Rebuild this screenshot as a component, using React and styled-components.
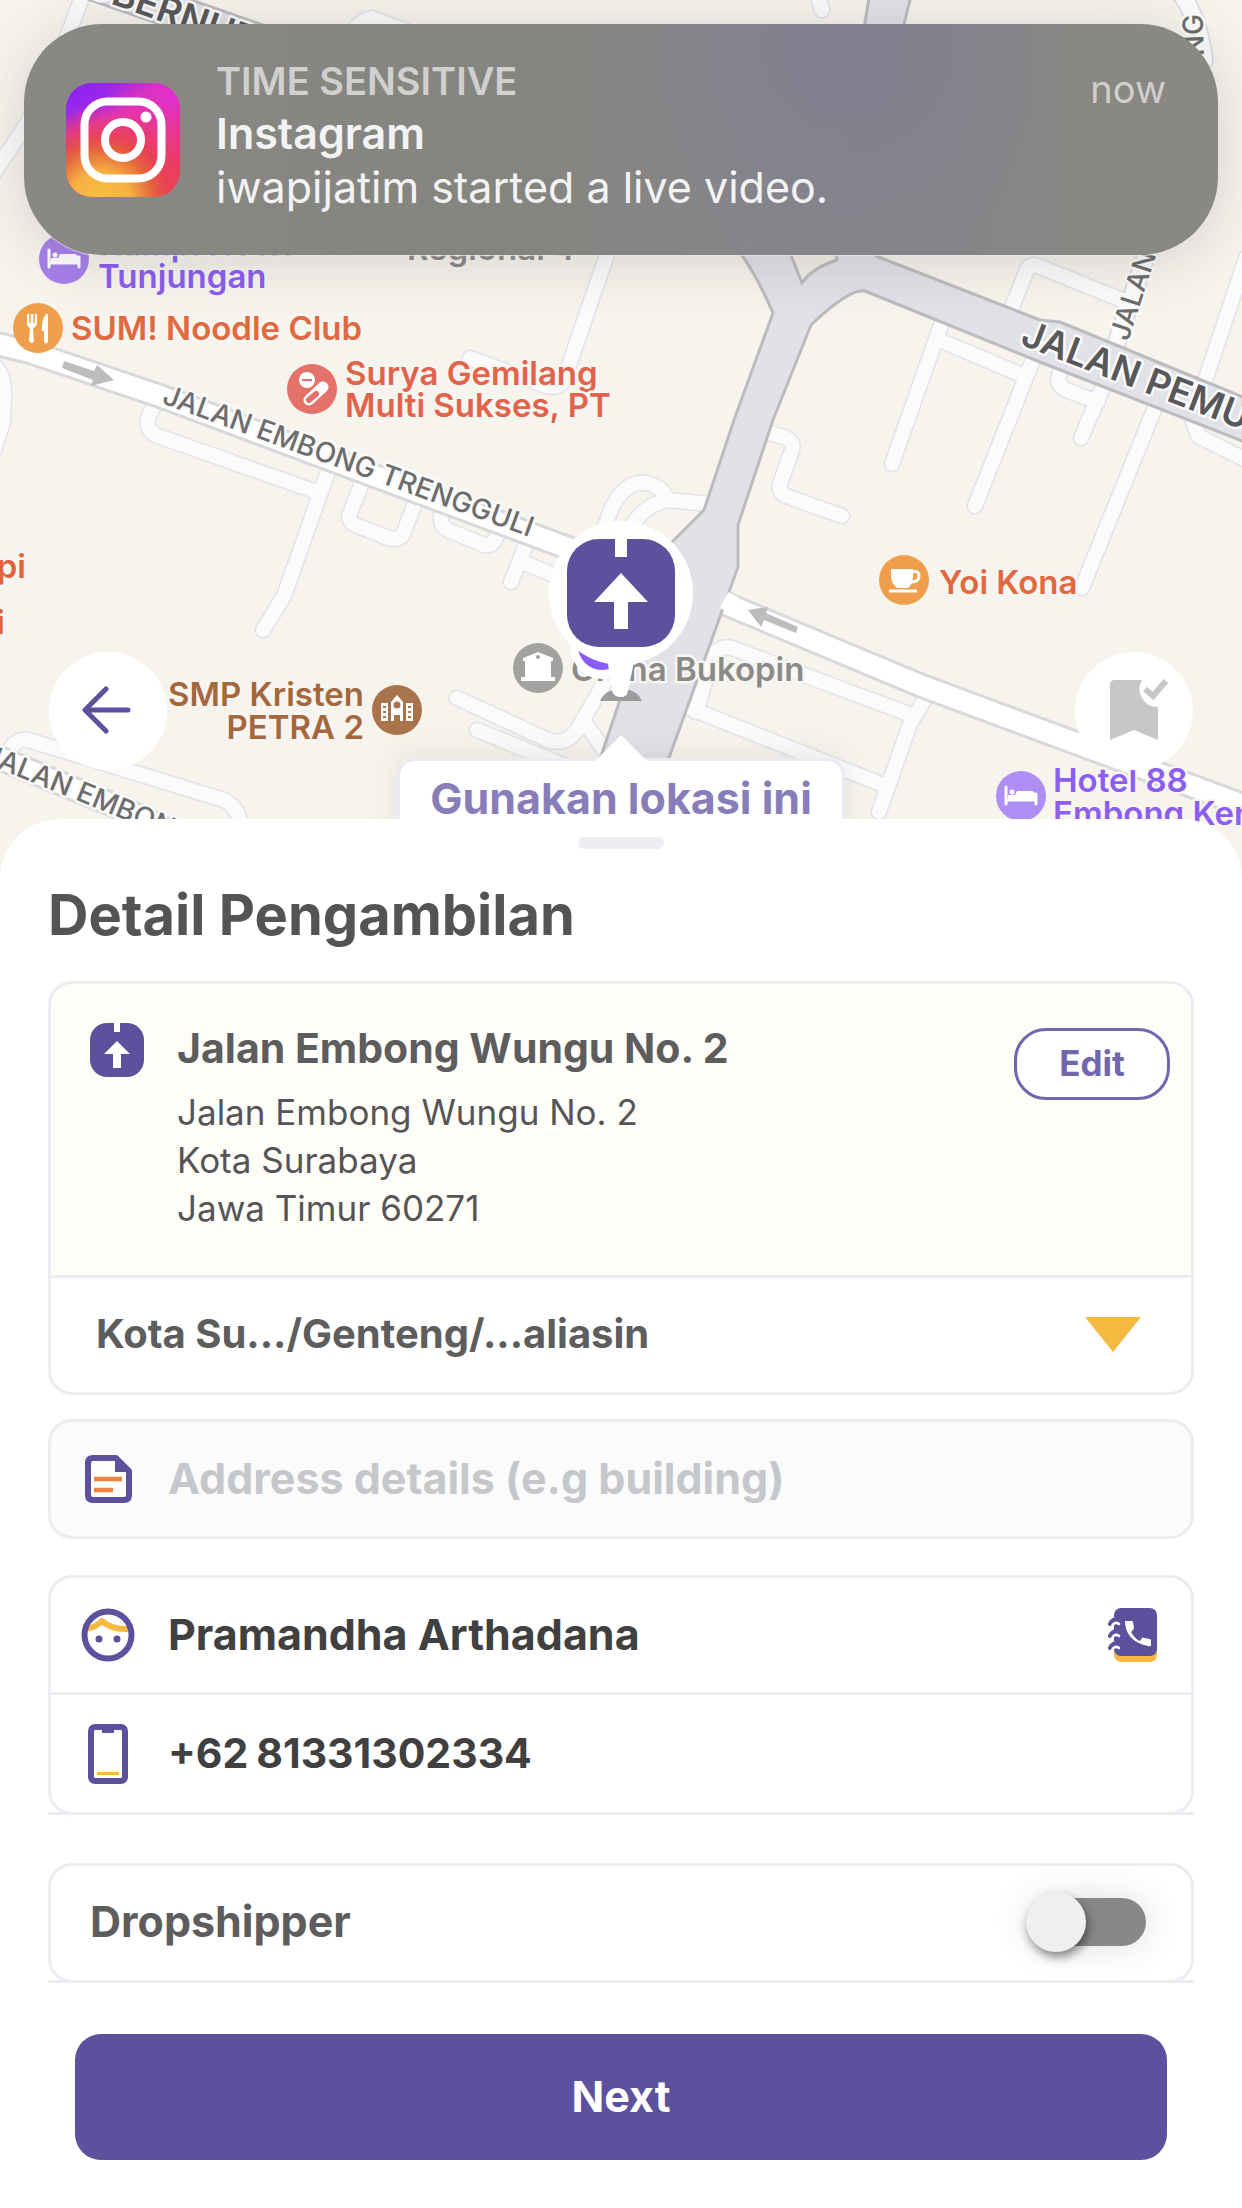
import React from "react";
import styled, { createGlobalStyle } from "styled-components";

const purple = "#5c519c";
const amber = "#f7b942";
const line = "#ececf2";

const GlobalStyle = createGlobalStyle`
  *, *::before, *::after { box-sizing: border-box; }
  body { margin: 0; background: #ffffff; }
  body, button, input, select { font-family: Inter, "Liberation Sans", sans-serif; }
`;

const Screen = styled.div`
  position: relative;
  min-height: 100vh;
  display: flex;
  flex-direction: column;
  overflow: hidden;
`;

/* ---------- notification ---------- */

const Notification = styled.aside`
  position: absolute;
  z-index: 3;
  top: 24px;
  left: 24px;
  right: 24px;
  display: flex;
  align-items: center;
  gap: 36px;
  height: 231px;
  padding: 0 52px 0 42px;
  border-radius: 78px;
  color: #f3f3f4;
  background:
    radial-gradient(circle at 69% 10%, rgba(128, 126, 146, 0.8), rgba(128, 126, 146, 0) 26%),
    linear-gradient(90deg, #898884 0%, #858580 42%, #86858a 62%, #878489 78%, #898882 92%);
  box-shadow: 0 6px 60px rgba(60, 58, 50, 0.18), 0 1px 1px rgba(255, 255, 255, 0.8);
`;

const NoticeText = styled.div`
  flex: 1;
  display: flex;
  flex-direction: column;
  padding-bottom: 10px;
`;

const NoticeTag = styled.span`
  font-size: 38px;
  line-height: 50px;
  font-weight: 600;
  color: #d0d0cf;
`;

const NoticeTitle = styled.strong`
  font-size: 43px;
  line-height: 54px;
  font-weight: 600;
`;

const NoticeBody = styled.span`
  font-size: 43px;
  line-height: 54px;
`;

const NoticeTime = styled.time`
  align-self: flex-start;
  padding-top: 40px;
  font-size: 38px;
  line-height: 50px;
  color: #cfcfce;
`;

/* ---------- map ---------- */

const MapArea = styled.section`
  position: relative;
  height: 880px;
  background: #f6f4ed;
`;

const MapSvg = styled.svg`
  display: block;
  width: 100%;
  height: 100%;
`;

const MapControls = styled.div`
  position: absolute;
  left: 49px;
  right: 49px;
  top: 652px;
  display: flex;
  justify-content: space-between;
`;

const RoundButton = styled.button`
  display: grid;
  place-items: center;
  width: 118px;
  height: 118px;
  padding: 0;
  border: 0;
  border-radius: 50%;
  background: #ffffff;
  cursor: pointer;
`;

const PinMark = styled.svg`
  position: absolute;
  left: 50%;
  top: 511px;
  width: 180px;
  height: 200px;
  transform: translateX(-50%);
`;

const LocationBubble = styled.button`
  position: absolute;
  left: 50%;
  top: 758px;
  transform: translateX(-50%);
  width: 448px;
  height: 100px;
  padding: 12px 0 0;
  border: 3px solid #ebeaf2;
  border-radius: 18px;
  background: #ffffff;
  box-shadow: 0 -4px 30px rgba(70, 66, 50, 0.1);
  color: #877eb9;
  font-size: 43px;
  line-height: 50px;
  font-weight: 700;
  display: flex;
  justify-content: center;
  align-items: flex-start;
  cursor: pointer;
  &::before {
    content: "";
    position: absolute;
    left: 50%;
    top: -26px;
    transform: translateX(-50%);
    border: 28px solid transparent;
    border-top: 0;
    border-bottom: 28px solid #ffffff;
  }
`;

/* ---------- sheet ---------- */

const Sheet = styled.main`
  position: relative;
  z-index: 2;
  flex: 1;
  display: flex;
  flex-direction: column;
  margin-top: -61px;
  padding: 18px 48px 48px;
  border-radius: 60px 60px 0 0;
  background: #ffffff;
`;

const Handle = styled.div`
  align-self: center;
  width: 86px;
  height: 12px;
  border-radius: 6px;
  background: #eeedf3;
`;

const Heading = styled.h1`
  margin: 33px 0;
  font-size: 56px;
  line-height: 66px;
  font-weight: 700;
  color: #545456;
`;

const Card = styled.div`
  border: 3px solid ${line};
  border-radius: 24px;
  background: #ffffff;
  overflow: hidden;
`;

const MutedCard = styled(Card)`
  margin-top: 24px;
  background: #fbfbfb;
`;

const Underlined = styled.div`
  margin-top: ${(p) => p.$gap}px;
  border-bottom: 3px solid ${line};
  & > ${Card} { margin-bottom: -3px; }
`;

const AddressBlock = styled.div`
  display: flex;
  align-items: flex-start;
  gap: 33px;
  padding: 39px 21px 43px 39px;
  border-bottom: 3px solid ${line};
  background: #fffdf8;
`;

const AddressText = styled.div`
  flex: 1;
`;

const AddressTitle = styled.h2`
  margin: 0 0 15px;
  font-size: 41px;
  line-height: 50px;
  font-weight: 700;
  color: #5d5d5e;
`;

const AddressLine = styled.p`
  margin: 0;
  font-size: 35px;
  line-height: 48px;
  color: #555557;
`;

const EditButton = styled.button`
  width: 156px;
  height: 72px;
  margin-top: 5px;
  padding: 0 0 3px;
  border: 3px solid #7067ae;
  border-radius: 32px;
  background: #ffffff;
  color: #7067ae;
  font-size: 35px;
  font-weight: 700;
  cursor: pointer;
`;

const DistrictRow = styled.label`
  display: flex;
  align-items: center;
  height: 114px;
  padding: 0 50px 2px 45px;
`;

const DistrictSelect = styled.select`
  flex: 1;
  min-width: 0;
  padding: 0;
  border: 0;
  appearance: none;
  background: transparent;
  color: #5d5d5e;
  font-size: 40px;
  line-height: 50px;
  font-weight: 700;
  outline: none;
`;

const FieldRow = styled.label`
  display: flex;
  align-items: center;
  height: ${(p) => p.$height || 114}px;
  padding: 0 33px 0 30px;
  border-bottom: ${(p) => (p.$divided ? `3px solid ${line}` : "0")};
  box-sizing: content-box;
`;

const IconSlot = styled.span`
  flex: none;
  display: grid;
  place-items: center;
  width: 54px;
  margin-right: 33px;
`;

const TextInput = styled.input`
  flex: 1;
  min-width: 0;
  padding: 0 0 2px;
  border: 0;
  outline: none;
  background: transparent;
  color: #404041;
  font-size: ${(p) => p.$size || 43}px;
  line-height: 50px;
  font-weight: 700;
  &::placeholder { color: #c6c7ca; opacity: 1; }
`;

const DialCode = styled.span`
  margin-right: 8px;
  padding-bottom: 2px;
  color: #404041;
  font-size: 41px;
  line-height: 50px;
  font-weight: 700;
`;

const ContactsButton = styled.button`
  display: grid;
  padding: 0;
  border: 0;
  background: none;
  cursor: pointer;
`;

const SwitchRow = styled.label`
  display: flex;
  align-items: center;
  justify-content: space-between;
  height: 114px;
  padding: 0 45px 2px 39px;
`;

const SwitchText = styled.span`
  padding-bottom: 3px;
  color: #5d5d5e;
  font-size: 43px;
  line-height: 50px;
  font-weight: 700;
`;

const Switch = styled.input`
  appearance: none;
  display: flex;
  align-items: center;
  width: 118px;
  height: 48px;
  margin: 0;
  border-radius: 24px;
  background: ${(p) => (p.checked ? purple : "#8a8788")};
  box-shadow: 0 0 36px rgba(60, 50, 60, 0.16);
  cursor: pointer;
  &::before {
    content: "";
    width: 60px;
    height: 60px;
    margin-left: ${(p) => (p.checked ? "60px" : "-2px")};
    border-radius: 50%;
    background: #f0eff0;
    box-shadow: 2px 5px 10px rgba(0, 0, 0, 0.45);
  }
`;

const NextButton = styled.button`
  height: 126px;
  margin: 51px 27px 0;
  padding: 0 0 3px;
  border: 0;
  border-radius: 26px;
  background: ${purple};
  color: #ffffff;
  font-size: 43px;
  font-weight: 700;
  cursor: pointer;
`;

/* ---------- icons ---------- */

const InstagramLogo = () => (
  <svg width="114" height="114" viewBox="0 0 114 114" aria-hidden="true">
    <defs>
      <linearGradient id="igBase" x1="0.1" y1="0" x2="0.6" y2="1">
        <stop offset="0" stopColor="#8a22f5" />
        <stop offset="0.2" stopColor="#9d28ea" />
        <stop offset="0.36" stopColor="#e233bd" />
        <stop offset="0.6" stopColor="#ea3a78" />
        <stop offset="1" stopColor="#ea3d62" />
      </linearGradient>
      <radialGradient id="igWarm" cx="0.3" cy="1.05" r="0.85">
        <stop offset="0" stopColor="#f9c342" />
        <stop offset="0.32" stopColor="#f6b043" />
        <stop offset="0.55" stopColor="#e4653c" />
        <stop offset="0.7" stopColor="#e9444f" stopOpacity="0.8" />
        <stop offset="1" stopColor="#ea3a66" stopOpacity="0" />
      </radialGradient>
      <radialGradient id="igPink" cx="0.95" cy="0.1" r="0.6">
        <stop offset="0" stopColor="#dd2fd0" />
        <stop offset="1" stopColor="#ea35a5" stopOpacity="0" />
      </radialGradient>
    </defs>
    <rect width="114" height="114" rx="26" fill="url(#igBase)" />
    <rect width="114" height="114" rx="26" fill="url(#igPink)" />
    <rect width="114" height="114" rx="26" fill="url(#igWarm)" />
    <rect x="18.500" y="18.500" width="77" height="77" rx="23" fill="none" stroke="#fff" strokeWidth="8" />
    <circle cx="57" cy="57" r="18" fill="none" stroke="#fff" strokeWidth="8" />
    <circle cx="80" cy="34" r="5.500" fill="#fff" />
  </svg>
);

const BackArrow = () => (
  <svg width="52" height="52" viewBox="0 0 52 52" fill="none" stroke={purple} strokeWidth="5" strokeLinecap="round" strokeLinejoin="round" aria-hidden="true">
    <path d="M46 25H4M24 4L3 25L24 46" />
  </svg>
);

const BookmarkCheck = () => (
  <svg width="68" height="64" viewBox="-9 0 68 64" aria-hidden="true">
    <path d="M6 1H33A18 18 0 0 0 49 28V61L25 51L1 61V6Q1 1 6 1Z" fill="#c6c7c9" />
    <path d="M36 10L44 17L57 2" fill="none" stroke="#c6c7c9" strokeWidth="6" />
  </svg>
);

const PickupIcon = () => (
  <svg width="54" height="54" viewBox="0 0 54 54" aria-hidden="true">
    <rect width="54" height="54" rx="17" fill={purple} />
    <path d="M24 0H30V9H24ZM27 18L40 31H31V45H23V31H14Z" fill="#fff" />
  </svg>
);

const NoteIcon = () => (
  <svg width="47" height="48" viewBox="0 0 47 48" aria-hidden="true">
    <path d="M8 3H31L44 16V40Q44 45 39 45H8Q3 45 3 40V8Q3 3 8 3Z" fill="#fff" stroke={purple} strokeWidth="6" strokeLinejoin="round" />
    <path d="M31 3L44 16H31Z" fill={purple} stroke={purple} strokeWidth="2" />
    <path d="M9 24H37M9 35H28" stroke="#ee8345" strokeWidth="4.500" />
  </svg>
);

const FaceIcon = () => (
  <svg width="54" height="54" viewBox="0 0 54 54" aria-hidden="true">
    <path d="M7 20Q14 20 21 13Q31 22 47 21" fill="none" stroke={amber} strokeWidth="6" strokeLinejoin="round" />
    <circle cx="27" cy="27" r="23.500" fill="none" stroke={purple} strokeWidth="6" />
    <circle cx="18" cy="31" r="3.500" fill={purple} />
    <circle cx="36" cy="31" r="3.500" fill={purple} />
  </svg>
);

const PhoneIcon = () => (
  <svg width="40" height="60" viewBox="0 0 40 60" aria-hidden="true">
    <rect x="3" y="3" width="34" height="54" rx="4" fill="#fff" stroke={purple} strokeWidth="6" />
    <path d="M14 4H26V8Q26 9 25 9H15Q14 9 14 8Z" fill={purple} />
    <path d="M9 49.500H31" stroke={amber} strokeWidth="3" />
  </svg>
);

const ContactsIcon = () => (
  <svg width="50" height="56" viewBox="0 0 50 56" aria-hidden="true">
    <rect x="6" y="10" width="43" height="45" rx="7" fill={amber} />
    <rect x="6" y="1" width="43" height="48" rx="7" fill={purple} />
    {[16, 28, 40].map((y) => (
      <g key={y} fill="none" strokeLinecap="round">
        <path d={`M2 ${y + 1}Q4 ${y - 3} 8 ${y - 4}`} stroke={purple} strokeWidth="4" />
        <path d={`M4 ${y + 3}Q7 ${y - 2} 11 ${y + 1}`} stroke="#fff" strokeWidth="2.500" />
      </g>
    ))}
    <path d="M17 14H24Q25 14 25 15L26 21Q26 22 23 25Q27 32 32 34L34 31Q35 30 36 31L42 32Q43 32 43 34V38Q43 40 40 39Q19 35 17 16Z" fill="#fff" />
  </svg>
);

const DownTriangle = () => (
  <svg width="56" height="35" viewBox="0 0 56 35" aria-hidden="true">
    <path d="M0 0H56L28 35Z" fill="#f5b942" />
  </svg>
);

/* ---------- map drawing ---------- */

const lanes = [
  "M84 -8L66 40L28 122L-8 176",
  "M350 40Q354 22 372 18L430 40",
  "M612 240L566 374Q562 390 546 386L470 358",
  "M-8 364Q4 372 4 392L3 422L-6 450",
  "M160 394L148 418Q146 432 158 436L317 492",
  "M330 466L284 596L263 630",
  "M363 480L349 516Q350 524 358 526L388 538Q400 542 404 532L416 500",
  "M448 500L441 516Q440 526 448 530L484 545Q494 548 498 532",
  "M528 540L511 582M522 562L566 580",
  "M590 570L610 512Q624 480 646 483Q662 486 668 500L710 504M668 500Q640 505 624 540",
  "M6 762Q10 738 28 740L224 800Q240 808 241 830",
  "M457 698L548 740Q566 746 577 730L606 680",
  "M477 730L600 780M586 724L604 750",
  "M1011 310L1026 272Q1030 262 1038 266L1122 300",
  "M1246 258L1204 384M1158 400L1082 588",
  "M942 322L892 464",
  "M944 342L1024 376",
  "M1036 352L975 506",
  "M1062 366L1058 378Q1058 386 1066 390L1098 402M1106 380L1081 438",
  "M1190 412L1198 436L1250 462",
  "M816 -10L822 10",
  "M768 432L786 438Q794 442 792 450L780 484Q778 492 786 496L842 516",
  "M696 712L710 664Q716 644 732 648L914 716",
  "M928 694L910 724L879 812",
  "M684 706L886 786",
];

const streets = [
  "M-20 340L30 352L160 396L560 545L640 574",
  "M726 604L922 686L1100 752L1262 812",
  "M-30 746L130 812L170 832",
];

const sideStreets = ["M1158 220L1112 356", "M1178 -10Q1198 14 1204 60"];

const GREY = "#e1e2e7";
const EDGE = "#bcbcbe";

const labels = [
  { x: 99, y: 256, size: 33, color: "#8b5df0", text: "Kampi Hotel" },
  { x: 98, y: 288, size: 33, color: "#8b5df0", text: "Tunjungan" },
  { x: 407, y: 260, size: 33, color: "#8a8a88", text: "Regional 4" },
  { x: 71, y: 340, size: 33, color: "#e0693f", text: "SUM! Noodle Club" },
  { x: 345, y: 385, size: 33, color: "#e2634c", text: "Surya Gemilang" },
  { x: 345, y: 417, size: 33, color: "#e2634c", text: "Multi Sukses, PT" },
  { x: 26, y: 578, size: 33, color: "#e0633f", text: "pi", anchor: "end" },
  { x: 5, y: 634, size: 33, color: "#e0633f", text: "i", anchor: "end" },
  { x: 364, y: 706, size: 33, color: "#a5683e", text: "SMP Kristen", anchor: "end" },
  { x: 364, y: 739, size: 33, color: "#a5683e", text: "PETRA 2", anchor: "end" },
  { x: 571, y: 681, size: 33, color: "#8a8a86", text: "Graha Bukopin" },
  { x: 939, y: 594, size: 33, color: "#e0693f", text: "Yoi Kona" },
  { x: 1053, y: 792, size: 33, color: "#8b5df0", text: "Hotel 88" },
  { x: 1053, y: 825, size: 33, color: "#8b5df0", text: "Embong Kenongo" },
];

const Label = styled.text`
  font-family: Inter, "Liberation Sans", sans-serif;
  font-weight: 600;
  paint-order: stroke;
  stroke: #f8f6f1;
  stroke-width: 5px;
  stroke-linejoin: round;
`;

const RoadName = styled(Label)`
  font-weight: ${(p) => (p.$major ? 600 : 500)};
  font-size: ${(p) => (p.$major ? 37 : 28)}px;
  fill: ${(p) => (p.$major ? "#58585a" : "#6d6d6d")};
  stroke: #fbfbfb;
`;

const Bed = ({ x, y, color }) => (
  <g transform={`translate(${x} ${y})`}>
    <circle r="25" fill={color} />
    <path d="M-15 -9V8M15 -2V8M-15 4H15" stroke="#fff" strokeWidth="3" fill="none" strokeLinecap="round" />
    <path d="M-13 1V-1H-6L-4 -5H11Q15 -4 15 1V4H-13Z" fill="#fff" />
    <circle cx="-9" cy="-4" r="2.500" fill="#fff" />
  </g>
);

const MapDrawing = () => (
  <MapSvg viewBox="0 0 1242 880" preserveAspectRatio="xMidYMin slice" aria-label="Map">
    <g fill="none" strokeLinecap="round" strokeLinejoin="round">
      {lanes.map((d) => <path key={d} d={d} stroke="#e2e2e8" strokeWidth="17" />)}
      {sideStreets.map((d) => <path key={d} d={d} stroke="#dddde3" strokeWidth="20" />)}
      {lanes.map((d) => <path key={d} d={d} stroke="#fbfbfc" strokeWidth="14" />)}
      {streets.map((d) => <path key={d} d={d} stroke="#d9d9dc" strokeWidth="26" />)}
      {streets.map((d) => <path key={d} d={d} stroke="#ffffff" strokeWidth="20" />)}
      {sideStreets.map((d) => <path key={d} d={d} stroke="#fbfbfc" strokeWidth="16" />)}
      <path d="M60 -28L360 76" stroke={EDGE} strokeWidth="36" />
      <path d="M60 -28L360 76" stroke={GREY} strokeWidth="30" />
    </g>
    <path
      fill={GREY}
      stroke={EDGE}
      strokeWidth="3"
      strokeLinejoin="round"
      d="M870 -8L862 40L838 230L789 230L720 230Q748 255 773 313L734 420L704 510L672 542L640 580L620 700L566 860L632 860L738 567V525L773 420L811 325Q850 288 865 291L1040 362L1250 444V400L1060 322L1040 320L876 256L880 200L904 24L912 -8Z"
    />
    <path d="M785 240L802 283Q812 268 837 260L830 230Z" fill="#f1efe8" stroke={EDGE} strokeWidth="3" />
    <path d="M724 600L734 605" stroke="#fff" strokeWidth="18" />
    <g fill="#bdbdbe">
      <path d="M64 361L94 371L97 365L114 380L91 386L93 380L62 368Z" />
      <path d="M748 610L768 607L766 613L798 627L796 633L764 620L761 627Z" />
    </g>

    <RoadName $major transform="translate(58 -15) rotate(19.500)">GUBERNUR</RoadName>
    <RoadName $major transform="translate(1019 344) rotate(21)">JALAN PEMUDA</RoadName>
    <RoadName transform="translate(161 403) rotate(20)">JALAN EMBONG TRENGGULI</RoadName>
    <RoadName transform="translate(-18 762) rotate(22)">JALAN EMBONG</RoadName>
    <RoadName transform="translate(1128 342) rotate(-72)">JALAN</RoadName>
    <RoadName transform="translate(1204 56) rotate(-92)">NG</RoadName>

    {labels.map((l) => (
      <Label key={l.text} x={l.x} y={l.y} fill={l.color} fontSize={l.size} textAnchor={l.anchor}>
        {l.text}
      </Label>
    ))}

    <Bed x={64} y={259} color="#a681ea" />
    <Bed x={1021} y={796} color="#ae8df5" />
    <g transform="translate(38 328)">
      <circle r="25" fill="#ef9f4b" />
      <path d="M-11 -14V-5Q-11 -1 -8 0L-9 13Q-6 17 -4 13L-5 0Q-1 -1 -1 -5V-14M-6 -14V-2M8 -14Q3 -8 4 3H6V14Q8 17 10 14V-14Z" fill="#fff" />
      <path d="M-8 -14V-5M-4 -14V-5" stroke="#ef9f4b" strokeWidth="1.500" />
    </g>
    <g transform="translate(312 389)">
      <circle r="25" fill="#e4716a" />
      <circle cx="-5" cy="-9" r="8" fill="#fff" />
      <path d="M-10 -9H0" stroke="#e4716a" strokeWidth="2" />
      <path d="M-3 11L11 -2" stroke="#fff" strokeWidth="11" strokeLinecap="round" />
      <path d="M-3 11L4 5" stroke="#e4716a" strokeWidth="6" strokeLinecap="round" />
    </g>
    <g transform="translate(538 668)">
      <circle r="25" fill="#a2a2a0" />
      <path d="M0 -16L15 -10V-7H13V9H17V13H-17V9H-13V-7H-15V-10Z" fill="#fff" />
      <circle cy="-11" r="2" fill="#a2a2a0" />
    </g>
    <g transform="translate(397 710)">
      <circle r="25" fill="#a9734c" />
      <path d="M-16 -7H-9V11H-16ZM9 -7H16V11H9ZM-6 11V-8L0 -15L6 -8V11H3V5H-3V11Z" fill="#fff" />
      <circle cy="-5" r="3.500" fill="#a9734c" />
      <path d="M-14 -3H-11M-14 2H-11M-14 7H-11M11 -3H14M11 2H14M11 7H14" stroke="#a9734c" strokeWidth="2" />
    </g>
    <g transform="translate(904 580)">
      <circle r="25" fill="#ef9f4b" />
      <path d="M-13 -11H9V-4Q9 4 4 8H-7Q-13 3 -13 -4Z" fill="#fff" />
      <path d="M8 -8Q15 -10 15 -4Q15 2 7 2M-15 11H13" stroke="#fff" strokeWidth="3" fill="none" />
    </g>
  </MapSvg>
);

const CenterPin = () => (
  <PinMark viewBox="0 0 180 200" aria-hidden="true">
    <path d="M69 190Q74 178 90 178Q106 178 111 190Z" fill="#9c9c9d" />
    <circle cx="71" cy="137" r="31" fill="#fff" />
    <circle cx="71" cy="135" r="24" fill="#8a5cf6" />
    <circle cx="90" cy="82" r="72" fill="#fff" />
    <path d="M76 146L81 180Q83 186 90 186Q96 186 97 180L104 146Z" fill="#fff" />
    <rect x="36" y="28" width="108" height="108" rx="32" fill={purple} />
    <path d="M84 28H96V46H84ZM90 62L117 91H97V118H83V91H63Z" fill="#fff" />
  </PinMark>
);

export default function App() {
  const [dropship, setDropship] = React.useState(false);
  const [details, setDetails] = React.useState("");
  const [name, setName] = React.useState("Pramandha Arthadana");
  const [phone, setPhone] = React.useState("81331302334");

  return (
    <Screen>
      <GlobalStyle />

      <Notification>
        <InstagramLogo />
        <NoticeText>
          <NoticeTag>TIME SENSITIVE</NoticeTag>
          <NoticeTitle>Instagram</NoticeTitle>
          <NoticeBody>iwapijatim started a live video.</NoticeBody>
        </NoticeText>
        <NoticeTime>now</NoticeTime>
      </Notification>

      <MapArea>
        <MapDrawing />
        <MapControls>
          <RoundButton type="button" aria-label="Back"><BackArrow /></RoundButton>
          <RoundButton type="button" aria-label="Saved locations"><BookmarkCheck /></RoundButton>
        </MapControls>
        <CenterPin />
        <LocationBubble type="button">Gunakan lokasi ini</LocationBubble>
      </MapArea>

      <Sheet>
        <Handle />
        <Heading>Detail Pengambilan</Heading>

        <Card>
          <AddressBlock>
            <PickupIcon />
            <AddressText>
              <AddressTitle>Jalan Embong Wungu No. 2</AddressTitle>
              <AddressLine>Jalan Embong Wungu No. 2</AddressLine>
              <AddressLine>Kota Surabaya</AddressLine>
              <AddressLine>Jawa Timur 60271</AddressLine>
            </AddressText>
            <EditButton type="button">Edit</EditButton>
          </AddressBlock>
          <DistrictRow>
            <DistrictSelect aria-label="District">
              <option>Kota Su.../Genteng/...aliasin</option>
            </DistrictSelect>
            <DownTriangle />
          </DistrictRow>
        </Card>

        <MutedCard>
          <FieldRow>
            <IconSlot><NoteIcon /></IconSlot>
            <TextInput
              aria-label="Address details"
              placeholder="Address details (e.g building)"
              value={details}
              onChange={(e) => setDetails(e.target.value)}
            />
          </FieldRow>
        </MutedCard>

        <Underlined $gap={36}>
          <Card>
            <FieldRow $divided>
              <IconSlot><FaceIcon /></IconSlot>
              <TextInput aria-label="Name" value={name} onChange={(e) => setName(e.target.value)} />
              <ContactsButton type="button" aria-label="Choose from contacts"><ContactsIcon /></ContactsButton>
            </FieldRow>
            <FieldRow $height={117}>
              <IconSlot><PhoneIcon /></IconSlot>
              <DialCode>+62</DialCode>
              <TextInput $size={41} type="tel" aria-label="Phone number" value={phone} onChange={(e) => setPhone(e.target.value)} />
            </FieldRow>
          </Card>
        </Underlined>

        <Underlined $gap={48}>
          <Card>
            <SwitchRow>
              <SwitchText>Dropshipper</SwitchText>
              <Switch type="checkbox" role="switch" checked={dropship} onChange={(e) => setDropship(e.target.checked)} />
            </SwitchRow>
          </Card>
        </Underlined>

        <NextButton type="button">Next</NextButton>
      </Sheet>
    </Screen>
  );
}
